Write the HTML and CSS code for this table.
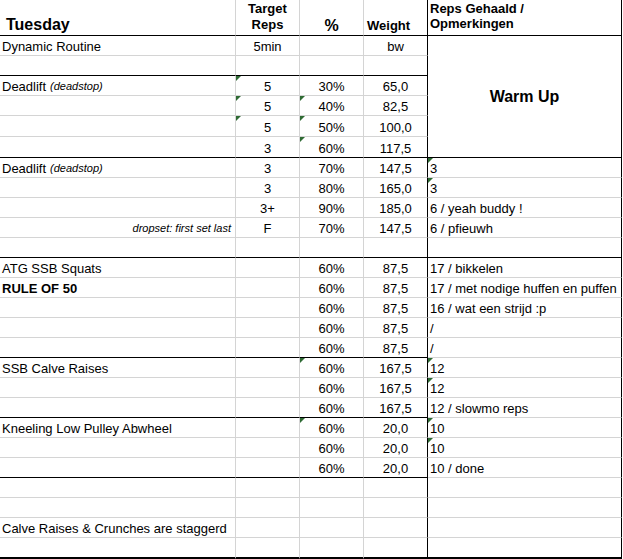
FILE: index.html
```html
<!DOCTYPE html>
<html lang="nl">
<head>
<meta charset="utf-8">
<title>Tuesday</title>
<link rel="stylesheet" href="styles.css">
</head>
<body>
<div class="sheet">
  <div class="c bb h-title">Tuesday</div>
  <div class="c bb h-reps">Target<br>Reps</div>
  <div class="c bb h-pct">%</div>
  <div class="c bb d h-weight">Weight</div>
  <div class="c bb e h-notes">Reps Gehaald /<br>Opmerkingen</div>

  <!-- row 0 -->
  <div class="c">Dynamic Routine</div>
  <div class="c ctr">5min</div>
  <div class="c"></div>
  <div class="c d ctr">bw</div>
  <div class="c e bb merged">Warm Up</div>
  <!-- row 1 -->
  <div class="c bb"></div><div class="c bb"></div><div class="c bb"></div><div class="c d bb"></div>
  <!-- row 2 -->
  <div class="c">Deadlift <i class="note">(deadstop)</i></div>
  <div class="c ctr tri">5</div>
  <div class="c ctr">30%</div>
  <div class="c d ctr">65,0</div>
  <!-- row 3 -->
  <div class="c"></div>
  <div class="c ctr tri">5</div>
  <div class="c ctr tri">40%</div>
  <div class="c d ctr">82,5</div>
  <!-- row 4 -->
  <div class="c"></div>
  <div class="c ctr tri">5</div>
  <div class="c ctr tri">50%</div>
  <div class="c d ctr">100,0</div>
  <!-- row 5 -->
  <div class="c bb"></div>
  <div class="c bb ctr">3</div>
  <div class="c bb ctr tri">60%</div>
  <div class="c bb d ctr">117,5</div>
  <!-- row 6 -->
  <div class="c">Deadlift <i class="note">(deadstop)</i></div>
  <div class="c ctr">3</div>
  <div class="c ctr">70%</div>
  <div class="c d ctr">147,5</div>
  <div class="c e tri">3</div>
  <!-- row 7 -->
  <div class="c"></div>
  <div class="c ctr">3</div>
  <div class="c ctr">80%</div>
  <div class="c d ctr">165,0</div>
  <div class="c e tri">3</div>
  <!-- row 8 -->
  <div class="c"></div>
  <div class="c ctr">3+</div>
  <div class="c ctr">90%</div>
  <div class="c d ctr">185,0</div>
  <div class="c e">6 / yeah buddy !</div>
  <!-- row 9 -->
  <div class="c end"><i class="note">dropset: first set last</i></div>
  <div class="c ctr">F</div>
  <div class="c ctr">70%</div>
  <div class="c d ctr">147,5</div>
  <div class="c e">6 / pfieuwh</div>
  <!-- row 10 -->
  <div class="c bb"></div><div class="c bb"></div><div class="c bb"></div><div class="c d bb"></div><div class="c e bb"></div>
  <!-- row 11 -->
  <div class="c">ATG SSB Squats</div>
  <div class="c"></div>
  <div class="c ctr">60%</div>
  <div class="c d ctr">87,5</div>
  <div class="c e">17 / bikkelen</div>
  <!-- row 12 -->
  <div class="c bold">RULE OF 50</div>
  <div class="c"></div>
  <div class="c ctr">60%</div>
  <div class="c d ctr">87,5</div>
  <div class="c e">17 / met nodige huffen en puffen</div>
  <!-- row 13 -->
  <div class="c"></div>
  <div class="c"></div>
  <div class="c ctr">60%</div>
  <div class="c d ctr">87,5</div>
  <div class="c e">16 / wat een strijd :p</div>
  <!-- row 14 -->
  <div class="c"></div>
  <div class="c"></div>
  <div class="c ctr">60%</div>
  <div class="c d ctr">87,5</div>
  <div class="c e">/</div>
  <!-- row 15 -->
  <div class="c bb"></div>
  <div class="c bb"></div>
  <div class="c bb ctr">60%</div>
  <div class="c bb d ctr">87,5</div>
  <div class="c e">/</div>
  <!-- row 16 -->
  <div class="c">SSB Calve Raises</div>
  <div class="c"></div>
  <div class="c ctr tri">60%</div>
  <div class="c d ctr">167,5</div>
  <div class="c e tri">12</div>
  <!-- row 17 -->
  <div class="c"></div>
  <div class="c"></div>
  <div class="c ctr">60%</div>
  <div class="c d ctr">167,5</div>
  <div class="c e tri">12</div>
  <!-- row 18 -->
  <div class="c bb"></div>
  <div class="c bb"></div>
  <div class="c bb ctr">60%</div>
  <div class="c bb d ctr">167,5</div>
  <div class="c e">12 / slowmo reps</div>
  <!-- row 19 -->
  <div class="c">Kneeling Low Pulley Abwheel</div>
  <div class="c"></div>
  <div class="c ctr tri">60%</div>
  <div class="c d ctr">20,0</div>
  <div class="c e tri">10</div>
  <!-- row 20 -->
  <div class="c"></div>
  <div class="c"></div>
  <div class="c ctr">60%</div>
  <div class="c d ctr">20,0</div>
  <div class="c e tri">10</div>
  <!-- row 21 -->
  <div class="c bb"></div>
  <div class="c bb"></div>
  <div class="c bb ctr">60%</div>
  <div class="c bb d ctr">20,0</div>
  <div class="c e">10 / done</div>
  <!-- row 22 -->
  <div class="c"></div><div class="c"></div><div class="c"></div><div class="c d"></div><div class="c e"></div>
  <!-- row 23 -->
  <div class="c"></div><div class="c"></div><div class="c"></div><div class="c d"></div><div class="c e"></div>
  <!-- row 24 -->
  <div class="c">Calve Raises &amp; Crunches are staggerd</div>
  <div class="c"></div><div class="c"></div><div class="c d"></div><div class="c e"></div>
  <!-- row 25 -->
  <div class="c last"></div><div class="c last"></div><div class="c last"></div><div class="c d last"></div><div class="c e last"></div>
</div>
</body>
</html>
```

FILE: styles.css
```css
* { box-sizing: border-box; }

html, body {
  margin: 0;
  padding: 0;
  background: #ffffff;
}

body {
  font-family: "Liberation Sans", Arial, sans-serif;
  font-size: 13px;
  color: #000000;
}

.sheet {
  display: grid;
  grid-template-columns: 236px 64px 64px 64px 194px;
  grid-template-rows: 36px repeat(4, 20px) 21px 21px repeat(19, 20px) 21px;
  width: 622px;
}

.c {
  position: relative;
  display: flex;
  align-items: flex-end;
  padding: 0 2px 1px 2px;
  line-height: 15px;
  white-space: nowrap;
  border-right: 1px solid #d4d4d4;
  border-bottom: 1px solid #d4d4d4;
}

.ctr { justify-content: center; }
.end { justify-content: flex-end; padding-right: 4px; }
.bold { font-weight: bold; }

.note {
  font-size: 11px;
  margin-left: 4px;
}
.end .note { margin-left: 0; }

.d { border-right-color: #000000; }
.e { border-right-color: #000000; }
.bb { border-bottom-color: #000000; }
.last { border-bottom: 2px solid #000000; }

/* header */
.h-title {
  font-size: 16px;
  font-weight: bold;
  line-height: 18px;
  padding-left: 6px;
  padding-bottom: 1px;
}
.h-reps {
  font-weight: bold;
  line-height: 16px;
  text-align: center;
  justify-content: center;
  align-items: flex-start;
  padding-top: 1px;
}
.h-pct {
  font-size: 16px;
  font-weight: bold;
  line-height: 18px;
  justify-content: center;
  padding-bottom: 0;
}
.h-weight {
  font-weight: bold;
  padding-left: 3px;
  padding-bottom: 2px;
}
.h-notes {
  font-weight: bold;
  align-items: flex-start;
  padding-top: 1px;
  padding-left: 2px;
}

.merged {
  grid-row: span 6;
  align-items: center;
  justify-content: center;
  font-size: 16px;
  font-weight: bold;
  line-height: 18px;
  padding: 0;
}

/* green error indicator triangle */
.tri::before {
  content: "";
  position: absolute;
  top: 0;
  left: 0;
  width: 0;
  height: 0;
  border-top: 5px solid #2f6b34;
  border-right: 5px solid transparent;
}
```
